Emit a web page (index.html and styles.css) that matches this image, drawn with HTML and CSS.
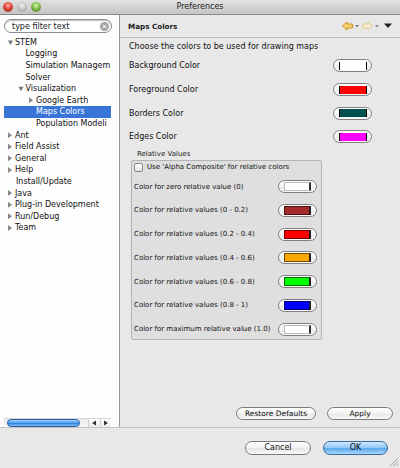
FILE: index.html
```html
<!DOCTYPE html>
<html>
<head>
<meta charset="utf-8">
<title>Preferences</title>
<link rel="stylesheet" href="styles.css">
</head>
<body>
<div class="window">
  <div class="titlebar">
    <span class="lights"><i class="tl red"></i><i class="tl grey"></i><i class="tl green"></i></span>
    <span class="title">Preferences</span>
  </div>
  <div class="main">
    <aside class="sidebar">
      <div class="filter"><span>type filter text</span><i class="clear"></i></div>
      <ul class="tree">
        <li class="l0 open">STEM</li>
        <li class="l1">Logging</li>
        <li class="l1">Simulation Managem</li>
        <li class="l1">Solver</li>
        <li class="l1 open">Visualization</li>
        <li class="l2 closed">Google Earth</li>
        <li class="l2 sel">Maps Colors</li>
        <li class="l2">Population Modeli</li>
        <li class="l0 closed">Ant</li>
        <li class="l0 closed">Field Assist</li>
        <li class="l0 closed">General</li>
        <li class="l0 closed">Help</li>
        <li class="l0 leaf">Install/Update</li>
        <li class="l0 closed">Java</li>
        <li class="l0 closed">Plug-in Development</li>
        <li class="l0 closed">Run/Debug</li>
        <li class="l0 closed">Team</li>
      </ul>
      <div class="hscroll">
        <div class="track"><div class="thumb"></div></div>
        <div class="sarrow">
          <svg width="6" height="6" viewBox="0 0 6 6"><polygon points="1,3 5,0.5 5,5.5" fill="#333"/></svg>
        </div>
        <div class="sarrow">
          <svg width="6" height="6" viewBox="0 0 6 6"><polygon points="5,3 1,0.5 1,5.5" fill="#333"/></svg>
        </div>
      </div>
    </aside>
    <section class="content">
      <header class="head">
        <span class="head-title">Maps Colors</span>
        <svg class="nav" width="52" height="10" viewBox="0 0 52 10">
          <polygon points="0.5,5 5,0.8 5,3 10.5,3 10.5,7 5,7 5,9.2" fill="#f8d26e" stroke="#c98a16" stroke-width="0.9"/>
          <polygon points="13,4 17,4 15,6.5" fill="#777"/>
          <polygon points="30.5,5 26,0.8 26,3 20.5,3 20.5,7 26,7 26,9.2" fill="#f6ead0" stroke="#e3cc8e" stroke-width="0.9"/>
          <polygon points="33,4 37,4 35,6.5" fill="#888"/>
          <polygon points="42,2.5 50,2.5 46,7" fill="#222"/>
        </svg>
      </header>
      <div class="body">
        <p class="intro">Choose the colors to be used for drawing maps</p>
        <div class="crow"><span>Background Color</span><span class="cbtn"><i class="sw c-white"></i></span></div>
        <div class="crow"><span>Foreground Color</span><span class="cbtn"><i class="sw c-red"></i></span></div>
        <div class="crow"><span>Borders Color</span><span class="cbtn"><i class="sw c-teal"></i></span></div>
        <div class="crow"><span>Edges Color</span><span class="cbtn"><i class="sw c-magenta"></i></span></div>
        <div class="grp-label">Relative Values</div>
        <div class="group">
          <label class="check"><i class="box"></i><span>Use 'Alpha Composite' for relative colors</span></label>
          <div class="grow"><span>Color for zero relative value (0)</span><span class="cbtn small"><i class="sw c-white2"></i></span></div>
          <div class="grow"><span>Color for relative values (0 - 0.2)</span><span class="cbtn small"><i class="sw c-brown"></i></span></div>
          <div class="grow"><span>Color for relative values (0.2 - 0.4)</span><span class="cbtn small"><i class="sw c-red"></i></span></div>
          <div class="grow"><span>Color for relative values (0.4 - 0.6)</span><span class="cbtn small"><i class="sw c-orange"></i></span></div>
          <div class="grow"><span>Color for relative values (0.6 - 0.8)</span><span class="cbtn small"><i class="sw c-green"></i></span></div>
          <div class="grow"><span>Color for relative values (0.8 - 1)</span><span class="cbtn small"><i class="sw c-blue"></i></span></div>
          <div class="grow"><span>Color for maximum relative value (1.0)</span><span class="cbtn small"><i class="sw c-white2"></i></span></div>
        </div>
      </div>
      <div class="actions">
        <button class="btn restore">Restore Defaults</button>
        <button class="btn apply">Apply</button>
      </div>
    </section>
  </div>
  <footer class="footer">
    <button class="btn cancel">Cancel</button>
    <button class="btn ok">OK</button>
    <svg class="grip" width="9" height="9" viewBox="0 0 9 9">
      <line x1="1" y1="9" x2="9" y2="1" stroke="#999" stroke-width="0.8"/>
      <line x1="4" y1="9" x2="9" y2="4" stroke="#999" stroke-width="0.8"/>
      <line x1="7" y1="9" x2="9" y2="7" stroke="#999" stroke-width="0.8"/>
    </svg>
  </footer>
</div>
</body>
</html>
```
FILE: styles.css
```css
* { box-sizing: border-box; }
html, body { margin: 0; padding: 0; }
body {
  width: 400px;
  height: 468px;
  overflow: hidden;
  font-family: "DejaVu Sans", sans-serif;
  font-size: 8px;
  color: #111;
  background: #e8e8e8;
}
.window {
  width: 400px;
  height: 468px;
  display: flex;
  flex-direction: column;
}
.titlebar {
  height: 15px;
  flex: none;
  position: relative;
  display: flex;
  align-items: center;
  justify-content: center;
  background: linear-gradient(#e2e2e2, #c4c4c4);
  border-bottom: 1px solid #8a8a8a;
}
.lights {
  position: absolute;
  left: 3px;
  top: 2px;
  display: flex;
  gap: 4px;
}
.tl {
  display: block;
  width: 10px;
  height: 10px;
  border-radius: 50%;
}
.tl.red { background: radial-gradient(circle at 50% 35%, #ffb3a8 0, #e2453a 45%, #9e1a12 100%); }
.tl.grey { background: radial-gradient(circle at 50% 35%, #f2f2f2 0, #c2c2c2 50%, #8e8e8e 100%); }
.tl.green { background: radial-gradient(circle at 50% 35%, #d8f5b6 0, #7dbb45 45%, #3d7a18 100%); }
.title {
  font-size: 8px;
  color: #222;
  line-height: 14px;
}
.main {
  height: 412px;
  flex: none;
  display: flex;
}
.sidebar {
  width: 120px;
  flex: none;
  background: #fdfdfd;
  border-right: 1px solid #959595;
  display: flex;
  flex-direction: column;
}
.filter {
  margin: 4px 0 0 4px;
  width: 108px;
  height: 14px;
  border: 1px solid #8c8c8c;
  border-radius: 7px;
  background: #fff;
  box-shadow: inset 0 1px 1px rgba(0,0,0,0.25);
  display: flex;
  align-items: center;
  justify-content: space-between;
  padding: 0 2px 0 7px;
  color: #222;
}
.clear {
  display: block;
  width: 9px;
  height: 9px;
  border-radius: 50%;
  background: #a3a3a3;
  position: relative;
}
.clear::before, .clear::after {
  content: "";
  position: absolute;
  left: 4px;
  top: 2px;
  width: 1px;
  height: 5px;
  background: #fff;
  transform: rotate(45deg);
}
.clear::after { transform: rotate(-45deg); }
.tree {
  list-style: none;
  margin: 3.9px 0 0 0;
  padding: 0;
  flex: 1;
}
.tree li {
  height: 11.6px;
  line-height: 11.6px;
  margin: 0 8px 0 4px;
  white-space: nowrap;
  overflow: hidden;
  position: relative;
  color: #111;
}
.tree li::before {
  content: "";
  display: inline-block;
  width: 11px;
  height: 6px;
  vertical-align: -0.5px;
}
.tree li.l1 { padding-left: 10.5px; }
.tree li.l2 { padding-left: 21px; }
.tree li.open::before {
  background: linear-gradient(to bottom right, transparent 50%, transparent 50%);
  border: none;
  clip-path: polygon(4px 1px, 9px 1px, 6.5px 5.5px);
  background: #777;
}
.tree li.closed::before {
  clip-path: polygon(4px 0, 8px 3px, 4px 6px);
  background: #888;
}
.tree li.leaf { padding-left: 1px; }
.tree li.sel {
  background: #3875d7;
  color: #fff;
}
.hscroll {
  height: 9px;
  margin: 0 8px 0 4px;
  display: flex;
  background: #f4f4f4;
  border-top: 1px solid #d6d6d6;
}
.track {
  flex: 1;
  padding: 0 4px 0 3px;
  display: flex;
  align-items: center;
  background: linear-gradient(#e9e9e9, #f8f8f8);
}
.thumb {
  width: 73px;
  height: 8px;
  border-radius: 4px;
  border: 1px solid #2d5d9e;
  background: linear-gradient(#9fd0fb, #4f9cec 50%, #2e7fe0 55%, #85c2fb);
}
.sarrow {
  width: 11.5px;
  display: flex;
  align-items: center;
  justify-content: center;
  border-left: 1px solid #cfcfcf;
  background: linear-gradient(#ffffff, #ececec);
}
.content {
  flex: 1;
  display: flex;
  flex-direction: column;
}
.head {
  height: 23px;
  flex: none;
  border-bottom: 1px solid #bcbcbc;
  display: flex;
  align-items: center;
  justify-content: space-between;
  padding: 0 6px 0 8px;
}
.head-title {
  font-weight: bold;
  font-size: 7.2px;
  color: #222;
}
.body {
  padding: 3px 0 0 9px;
}
.intro {
  margin: 0 0 2px 0;
  height: 11px;
  line-height: 11px;
}
.crow {
  height: 23.7px;
  display: flex;
  align-items: center;
  justify-content: space-between;
  padding-right: 28px;
}
.cbtn {
  display: flex;
  align-items: center;
  width: 39px;
  height: 13px;
  border: 1px solid #7f7f7f;
  border-radius: 7px;
  background: linear-gradient(#ffffff, #f4f4f4 50%, #e9e9e9 55%, #fbfbfb);
  padding-left: 5px;
}
.sw {
  display: block;
  width: 28px;
  height: 8px;
  border-left: 1px solid #000;
  border-right: 1px solid #000;
}
.cbtn.small .sw {
  width: 27px;
  height: 9px;
  border: 1px solid rgba(0,0,0,0.55);
  border-right: 2px solid #222;
}
.c-white { background: #fff; }
.c-white2 { background: #fff; border-color: #bbb !important; border-right-color: #333 !important; }
.c-red { background: #ff0000; }
.c-teal { background: #00504f; }
.c-magenta { background: #ff00ff; }
.c-brown { background: #a52a2a; }
.c-orange { background: #f8a800; }
.c-green { background: #00ff00; }
.c-blue { background: #0000ff; }
.grp-label {
  margin: 1.7px 0 0 8px;
  height: 9.3px;
  line-height: 9px;
  font-size: 7px;
  color: #222;
}
.group {
  margin-left: 2px;
  width: 191px;
  height: 180px;
  border: 1px solid #b4b4b4;
  border-radius: 2px;
  background: #dfdfdf;
  padding: 1.5px 4.3px 0 2px;
  display: flex;
  flex-direction: column;
  gap: 10.77px;
  font-size: 7px;
}
.check {
  display: flex;
  align-items: center;
  gap: 4px;
  height: 10px;
  margin-bottom: -3px;
}
.box {
  display: block;
  width: 9px;
  height: 9px;
  border: 1px solid #888;
  border-radius: 2px;
  background: linear-gradient(#fff, #e6e6e6);
}
.grow {
  height: 13px;
  display: flex;
  align-items: center;
  justify-content: space-between;
}
.actions {
  margin-top: auto;
  margin-bottom: 7px;
  display: flex;
  justify-content: flex-end;
  gap: 11px;
  padding-right: 7px;
}
.btn {
  font-family: "DejaVu Sans", sans-serif;
  color: #111;
  height: 13px;
  padding: 0;
  border: 1px solid #7a7a7a;
  border-radius: 7px;
  background: linear-gradient(#ffffff, #f3f3f3 50%, #e6e6e6 55%, #fafafa);
  font-size: 7.5px;
  line-height: 11px;
}
.restore { width: 80px; }
.apply { width: 66px; }
.footer {
  flex: 1;
  border-top: 1px solid #c4c4c4;
  display: flex;
  justify-content: flex-end;
  align-items: flex-start;
  padding: 12.5px 0 0 0;
  gap: 12px;
  position: relative;
}
.footer .btn {
  height: 14.5px;
  font-size: 8px;
  line-height: 12.5px;
}
.cancel { width: 66px; }
.ok {
  width: 65px;
  margin-right: 12px;
  border-color: #3c679f !important;
  background: linear-gradient(#cfe7fc, #8fc5f6 50%, #5aa6ee 55%, #a9dafc) !important;
}
.grip {
  position: absolute;
  right: 2px;
  bottom: 2px;
}
```
